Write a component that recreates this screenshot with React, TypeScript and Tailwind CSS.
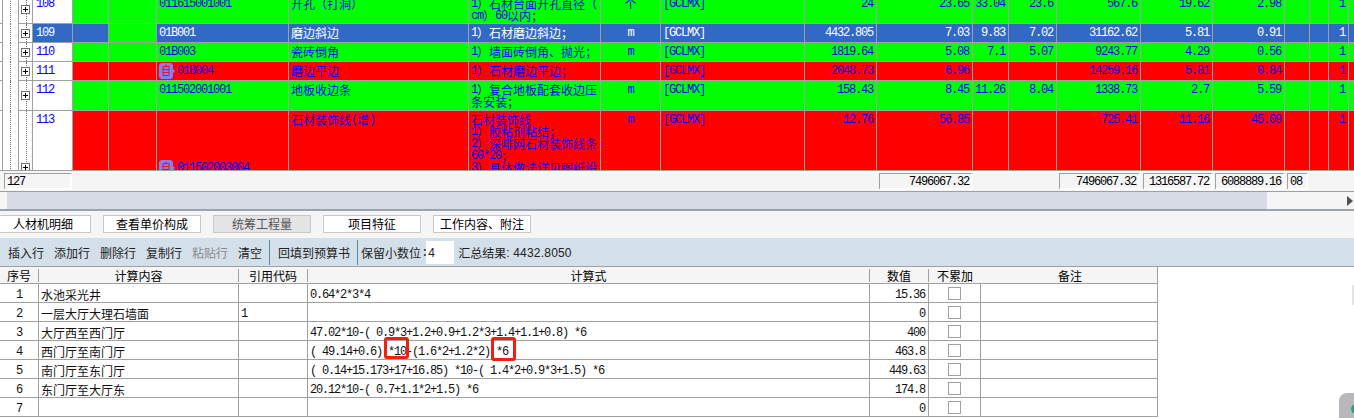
import React from "react";

const COLS = "grid-cols-[33px_40px_36px_48px_132px_180px_132px_60px_144px_72px_96px_36px_48px_84px_72px_72px_25px_19px_20px_5px]";
const CALC = "grid-cols-[39px_200px_69px_562px_59px_52px_178px]";

function T({ text }: { text: string }) {
  const parts = text.split(/([\u3000-\u9fff\uff00-\uffef]+)/);
  return (
    <>
      {parts.map((p, i) =>
        /[\u3000-\u9fff\uff00-\uffef]/.test(p) ? (
          <span key={i} className="align-top text-[12px] leading-[12px] [font-family:'Noto_Sans_CJK_SC',sans-serif]">{p}</span>
        ) : (
          <span key={i} className="align-top text-[12px] leading-[12px] tracking-[-1.2px] whitespace-pre-wrap [font-family:'Liberation_Mono',monospace]">{p}</span>
        )
      )}
    </>
  );
}

function Badge() {
  return (
    <svg width="18" height="16" viewBox="0 0 18 16" className="shrink-0">
      <path d="M2 0h10l2 2v4l2 2-2 2v4l-2 2H2l-2-2V2z" fill="#8080f8" />
      <path d="M4 3.5h6v9H4zM4 6.5h6M4 9.5h6M7 1.5v2" fill="none" stroke="#f01010" strokeWidth="1" />
    </svg>
  );
}

function TreeCell() {
  return (
    <div className="flex bg-white">
      <div className="w-[2px] border-b border-[#a0a0a0]" />
      <div className="w-[8px] border-l border-[#a0a0a0]" />
      <div className="w-[8px] border-l border-dotted border-[#707070]" />
      <div className="relative flex w-[15px] items-center justify-center border-l border-r border-b border-[#a0a0a0]">
        <div className="absolute inset-y-0 left-[7px] border-l border-dotted border-[#707070]" />
        <div className="relative flex h-[9px] w-[9px] items-center justify-center border border-[#707070] bg-white">
          <div className="absolute h-[1px] w-[5px] bg-black" />
          <div className="absolute h-[5px] w-[1px] bg-black" />
        </div>
      </div>
    </div>
  );
}

type RowData = {
  h: string; mt?: string; bg: string; no: string; code: string; badge?: boolean;
  name: string; desc: string; unit: string; qty: string; price: string; a: string; b: string; total: string; c: string; d: string;
};

const rows: RowData[] = [
  { h: "h-[29px]", mt: "-mt-[5px]", bg: "bg-[#00ff00]", no: "108", code: "011615001001", name: "开孔（打洞）", desc: "1）石材台面开孔直径（cm）60以内；", unit: "个", qty: "24", price: "23.65", a: "33.04", b: "23.6", total: "567.6", c: "19.62", d: "2.98" },
  { h: "h-[19px]", bg: "bg-[#316ac5]", no: "109", code: "01B001", name: "磨边斜边", desc: "1）石材磨边斜边；", unit: "m", qty: "4432.805", price: "7.03", a: "9.83", b: "7.02", total: "31162.62", c: "5.81", d: "0.91" },
  { h: "h-[19px]", bg: "bg-[#00ff00]", no: "110", code: "01B003", name: "瓷砖倒角", desc: "1）墙面砖倒角、抛光；", unit: "m", qty: "1819.64", price: "5.08", a: "7.1", b: "5.07", total: "9243.77", c: "4.29", d: "0.56" },
  { h: "h-[19px]", bg: "bg-[#ff0000]", no: "111", code: "01B004", badge: true, name: "磨边平边", desc: "1）石材磨边平边；", unit: "", qty: "2048.73", price: "6.96", a: "", b: "", total: "14259.16", c: "5.81", d: "0.84" },
  { h: "h-[30px]", bg: "bg-[#00ff00]", no: "112", code: "011502001001", name: "地板收边条", desc: "1）复合地板配套收边压条安装；", unit: "m", qty: "158.43", price: "8.45", a: "11.26", b: "8.04", total: "1338.73", c: "2.7", d: "5.59" },
  { h: "h-[114px]", bg: "bg-[#ff0000]", no: "113", code: "011502003004", badge: true, name: "石材装饰线(增)", desc: "石材装饰线\n1）胶粘剂粘结；\n2）深啡网石材装饰线条60*20；\n3）具体做法详见图纸设", unit: "m", qty: "12.76", price: "56.85", a: "", b: "", total: "725.41", c: "11.16", d: "45.09" },
];

const line = "border-r border-b border-[#a0a0a0]";

function Row({ r }: { r: RowData }) {
  const selected = r.no === "109";
  const color = selected ? "text-white" : "text-[#0000ff]";
  const Num = ({ v }: { v: string }) => (
    <div className={`${line} ${r.bg} ${color} pt-[3px] pr-[3px] text-right`}><T text={v} /></div>
  );
  return (
    <div className={`grid ${COLS} ${r.h} ${r.mt ?? ""} overflow-hidden leading-[12px]`}>
      <TreeCell />
      <div className={`${line} ${selected ? "bg-[#316ac5] text-white" : "bg-white text-[#0000ff]"} pl-[3px] pt-[3px]`}><T text={r.no} /></div>
      <div className={`${line} ${r.bg}`} />
      <div className={`${line} ${selected ? "bg-[#00ff00]" : r.bg}`} />
      <div className={`${line} ${r.bg} ${color} pl-[2px] ${r.badge ? "flex items-center" : "pt-[3px]"}`}>
        {r.badge && <Badge />}
        <span className="whitespace-nowrap"><T text={r.code} /></span>
      </div>
      <div className={`${line} ${r.bg} ${color} pl-[2px] pt-[3px]`}><T text={r.name} /></div>
      <div className={`${line} ${r.bg} ${color} whitespace-pre-line break-all [line-break:anywhere] pl-[2px] pt-[3px]`}><T text={r.desc} /></div>
      <div className={`${line} ${r.bg} ${color} pt-[3px] text-center`}><T text={r.unit} /></div>
      <div className={`${line} ${r.bg} ${color} pl-[2px] pt-[3px]`}><T text="[GCLMX]" /></div>
      <Num v={r.qty} />
      <Num v={r.price} />
      <Num v={r.a} />
      <Num v={r.b} />
      <Num v={r.total} />
      <Num v={r.c} />
      <Num v={r.d} />
      <div className={`${line} ${r.bg}`} />
      <div className={`${line} ${r.bg}`} />
      <Num v="1" />
      <div className={`${r.bg} border-b border-[#a0a0a0]`} />
    </div>
  );
}

function Sunken({ text, left = false }: { text: string; left?: boolean }) {
  return (
    <div className={`h-[17px] border-t border-l border-[#a0a0a0] border-r-2 border-b-2 border-r-white border-b-white bg-[#f5f5f5] pt-[2px] leading-[12px] text-black ${left ? "pl-[2px]" : "pr-[2px] text-right"}`}>
      <T text={text} />
    </div>
  );
}

const tabs = [
  { t: "人材机明细", w: "w-[96px] -ml-[5px]", active: false },
  { t: "查看单价构成", w: "w-[98px]", active: false },
  { t: "统筹工程量", w: "w-[98px]", active: true },
  { t: "项目特征", w: "w-[98px]", active: false },
  { t: "工作内容、附注", w: "w-[98px]", active: false },
];

const calcRows = [
  ["1", "水池采光井", "", "0.64*2*3*4", "15.36"],
  ["2", "一层大厅大理石墙面", "1", "", "0"],
  ["3", "大厅西至西门厅", "", "47.02*10-( 0.9*3+1.2+0.9+1.2*3+1.4+1.1+0.8) *6", "400"],
  ["4", "西门厅至南门厅", "", "( 49.14+0.6) *10-(1.6*2+1.2*2) *6", "463.8"],
  ["5", "南门厅至东门厅", "", "( 0.14+15.173+17+16.85) *10-( 1.4*2+0.9*3+1.5) *6", "449.63"],
  ["6", "东门厅至大厅东", "", "20.12*10-( 0.7+1.1*2+1.5) *6", "174.8"],
  ["7", "", "", "", "0"],
];

const headers = ["序号", "计算内容", "引用代码", "计算式", "数值", "不累加", "备注"];

const TOOLS: [string, boolean][] = [["插入行", false], ["添加行", false], ["删除行", false], ["复制行", false], ["粘贴行", true], ["清空", false]];

const cell = "border-r border-[#a0a0a0] pt-[5px]";

export default function App() {
  return (
    <div className="relative h-[418px] w-[1354px] overflow-hidden bg-white text-black">
      <div className="h-[171px] overflow-hidden border-b border-[#a0a0a0]">
        {rows.map((r) => <Row key={r.no} r={r} />)}
      </div>

      <div className={`grid ${COLS} h-[20px] items-start bg-[#f5f5f5] pt-[2px]`}>
        <div className="col-span-2 ml-[4px] mr-[1px]"><Sunken text="127" left /></div>
        <div className="col-span-8" />
        <div className="ml-[2px]"><Sunken text="7496067.32" /></div>
        <div className="col-span-2" />
        <div className="ml-[2px] mr-[1px]"><Sunken text="7496067.32" /></div>
        <div className="ml-[2px]"><Sunken text="1316587.72" /></div>
        <div className="ml-[2px]"><Sunken text="6088889.16" /></div>
        <div className="ml-[2px] mr-[2px]"><Sunken text="08" left /></div>
      </div>

      <div className="flex h-[19px] border-y border-[#a0a0a0] bg-[#f5f5f5]">
        <div className="w-[7px]" />
        <div className="w-[1260px] bg-[#d6dbe5]" />
        <div className="flex flex-1 items-center justify-end pr-[1px]">
          <svg width="6" height="10" viewBox="0 0 6 10"><path d="M0 0l6 5-6 5z" fill="#505050" /></svg>
        </div>
      </div>

      <div className="flex h-[28px] items-start gap-[12px] border-t border-[#8fa8b8] bg-[#f5f5f5] pt-[4px]">
        {tabs.map((t) => (
          <div
            key={t.t}
            className={`${t.w} flex h-[18px] items-center justify-center border border-[#c8c8c8] ${t.active ? "bg-[#e4e4e4] text-[#555555]" : "bg-white"}`}
          >
            <T text={t.t} />
          </div>
        ))}
      </div>

      <div className="flex h-[29px] items-center border-b border-[#a0a0a0] bg-[#d3e0e9] pl-[8px] pt-[1px] leading-[12px] text-[#222222]">
        <div className="flex gap-[10px]">
          {TOOLS.map(([t, off]) => (
            <span key={t} className={off ? "text-[#8a8a8a]" : ""}><T text={t} /></span>
          ))}
        </div>
        <div className="ml-[7px] h-[25px] w-[1px] bg-[#5f8aa5]" />
        <span className="ml-[8px]"><T text="回填到预算书" /></span>
        <div className="ml-[7px] h-[25px] w-[1px] bg-[#5f8aa5]" />
        <span className="ml-[3px]"><T text="保留小数位:" /></span>
        <div className="ml-[-1px] flex h-[23px] w-[28px] items-center bg-white pl-[2px]"><span className="text-[12px] [font-family:'Liberation_Sans',sans-serif]">4</span></div>
        <span className="ml-[4px] text-[12px]"><T text="汇总结果" /><span className="align-top text-[12px] leading-[12px] tracking-[0.2px] [font-family:'Liberation_Sans',sans-serif]">: 4432.8050</span></span>
      </div>

      <div className="w-[1158px]">
        <div className={`grid ${CALC} h-[17px] items-center border-b border-r border-[#a0a0a0] bg-[#f5f5f5]`}>
          {headers.map((h, i) => (
            <div key={h} className={`h-[13px] pt-[1px] text-center leading-[12px] ${i < 5 ? "border-r border-[#a0a0a0]" : ""}`}><T text={h} /></div>
          ))}
        </div>
        {calcRows.map((r) => (
          <div key={r[0]} className={`grid ${CALC} h-[19px] border-b border-r border-[#a0a0a0] leading-[12px] text-[#111111]`}>
            <div className={`${cell} text-center`}><T text={r[0]} /></div>
            <div className={`${cell} pl-[2px]`}><T text={r[1]} /></div>
            <div className={`${cell} pl-[2px]`}><T text={r[2]} /></div>
            <div className={`${cell} relative pl-[2px]`}>
              <span className="whitespace-pre"><T text={r[3]} /></span>
              {r[0] === "4" && (
                <>
                  <div className="absolute left-[76px] top-[-4px] h-[22px] w-[25px] rounded-[3px] border-[3px] border-[#f02010]" />
                  <div className="absolute left-[183px] top-[-4px] h-[24px] w-[25px] rounded-[3px] border-[3px] border-[#f02010]" />
                </>
              )}
            </div>
            <div className={`${cell} pr-[3px] text-right`}><T text={r[4]} /></div>
            <div className="flex items-center justify-center border-r border-[#a0a0a0]">
              <div className="h-[13px] w-[13px] border border-[#a0a0a0] bg-white" />
            </div>
            <div />
          </div>
        ))}
      </div>

      <div className="absolute right-0 top-[285px] h-[20px] w-[2px] bg-[#e4e4ea]" />
      <div className="absolute bottom-0 right-0 h-[25px] w-[15px] rounded-tl-[8px] bg-[#b8b8bc]">
        <div className="absolute right-[-3px] top-[11px] h-[10px] w-[6px] rounded-l-full bg-[#10b070]" />
      </div>
    </div>
  );
}
